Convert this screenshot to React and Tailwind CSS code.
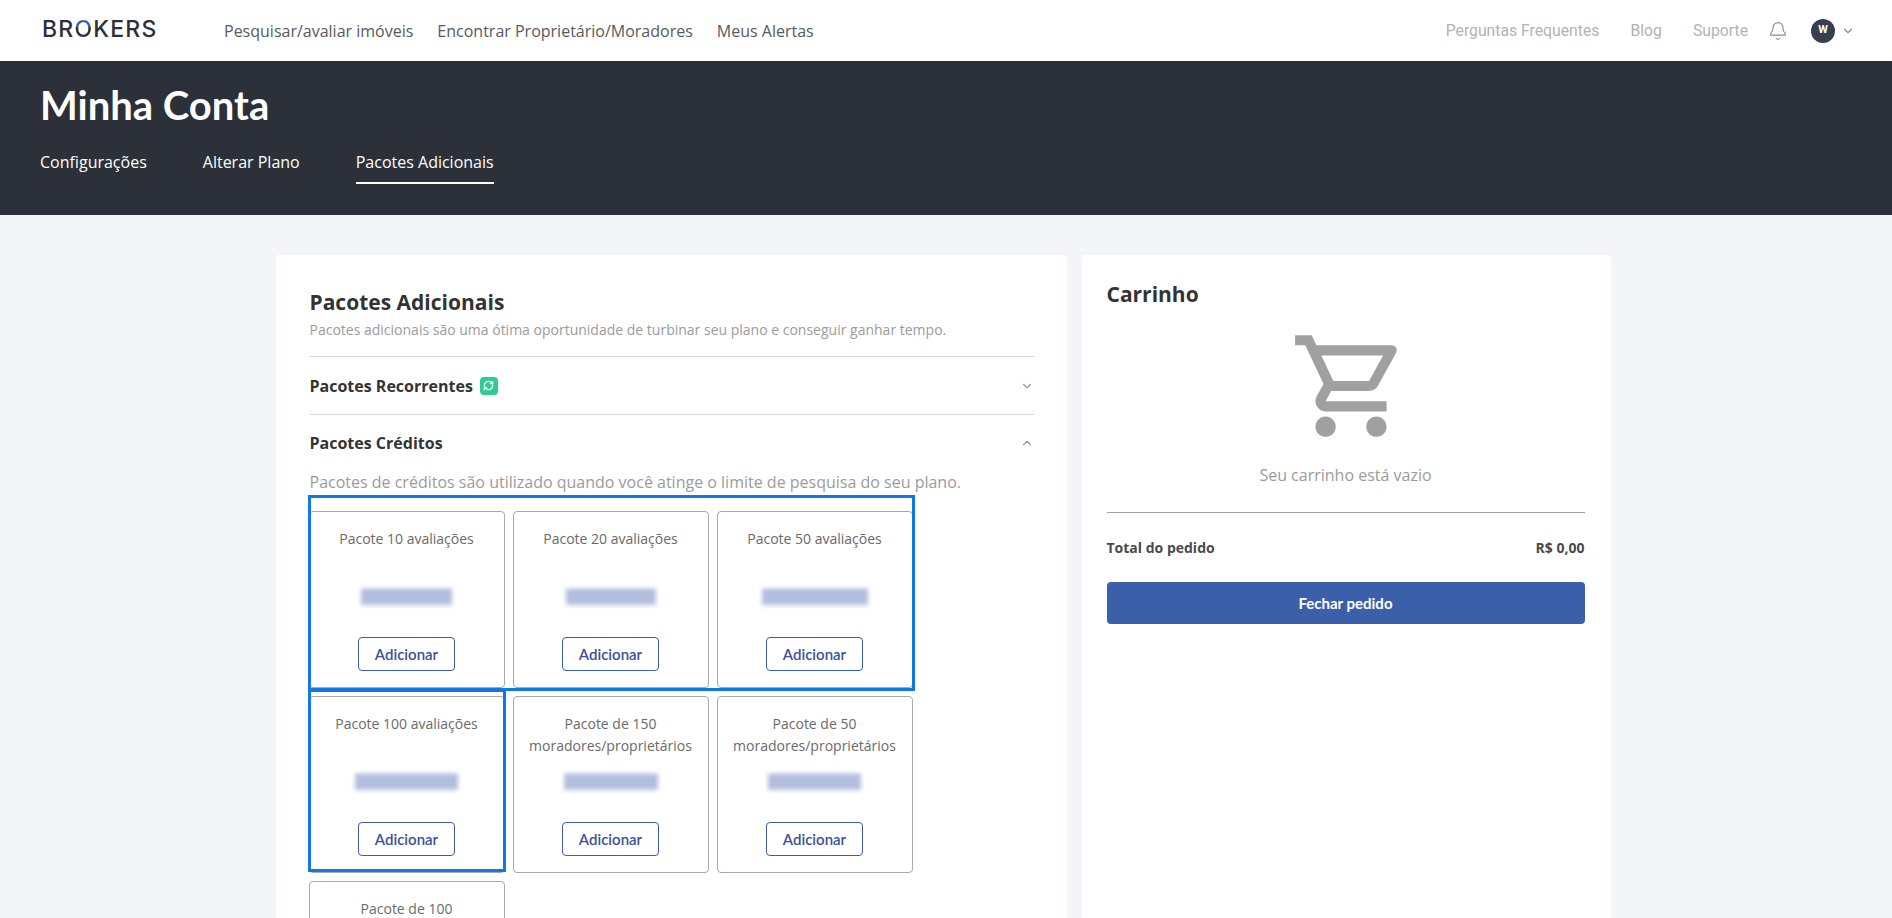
import React from "react";
import { Bell, ChevronDown, ChevronUp, RefreshCw } from "lucide-react";

const openSans = "font-['Open_Sans',sans-serif]";
const quick = "font-['Lato',sans-serif]";

const packages = [
  { id: 1, title: ["Pacote 10 avaliações"], blur: "w-[91px]" },
  { id: 2, title: ["Pacote 20 avaliações"], blur: "w-[90px]" },
  { id: 3, title: ["Pacote 50 avaliações"], blur: "w-[106px]" },
  { id: 4, title: ["Pacote 100 avaliações"], blur: "w-[103px]" },
  { id: 5, title: ["Pacote de 150", "moradores/proprietários"], blur: "w-[94px]" },
  { id: 6, title: ["Pacote de 50", "moradores/proprietários"], blur: "w-[93px]" },
  { id: 7, title: ["Pacote de 100", "moradores/proprietários"], blur: "w-[92px]" },
];

const PackageCard = ({ item }) => (
  <div className="h-[177px] rounded border border-[#a9a9a9] bg-white flex flex-col items-center pt-[16px]">
    <div className={`${openSans} h-[44px] text-center text-[14px] leading-[22px] text-[#6a6a6a]`}>
      {item.title.map((line) => (
        <div key={line}>{line}</div>
      ))}
    </div>
    <div className="flex flex-1 items-center">
      {/* price is blurred out in the picture */}
      <div
        className={`${item.blur} h-[16px] mb-[16px] blur-[2px] bg-[repeating-linear-gradient(180deg,#8a9dcb_0px,#8a9dcb_2px,#ccd4e9_2px,#ccd4e9_5px)]`}
      />
    </div>
    <button
      className={`${quick} mb-[16px] h-[34px] w-[97px] rounded border border-[#3b5ea9] bg-white text-[15px] font-semibold text-[#3b5199]`}
    >
      Adicionar
    </button>
  </div>
);

export default function App() {
  return (
    <div className={`${openSans} h-screen overflow-hidden bg-[#f3f5f9]`}>
      {/* top nav */}
      <header className="flex h-[61px] items-center bg-white pl-[42px] pr-[37px]">
        <div className="mb-[3px] w-[182px] font-['Inter',sans-serif] text-[23px] font-medium leading-none tracking-[1.2px] text-[#2c3038]">
          BR
          <span className="bg-[linear-gradient(180deg,#3b5ea9_0%,#3b5ea9_42%,#2c3038_42%,#2c3038_100%)] bg-clip-text text-transparent">O</span>
          KERS
        </div>
        <nav className="flex gap-[24px] text-[16px] text-[#555a60]">
          <span>Pesquisar/avaliar imóveis</span>
          <span>Encontrar Proprietário/Moradores</span>
          <span>Meus Alertas</span>
        </nav>
        <div className="ml-auto flex items-center font-['Roboto',sans-serif] text-[15.75px] text-[#b1b3b8]">
          <span>Perguntas Frequentes</span>
          <span className="ml-[31px]">Blog</span>
          <span className="ml-[31px]">Suporte</span>
          <Bell className="ml-[20px] h-[20px] w-[20px] text-[#8b8d92]" strokeWidth={1.4} />
          <div className="ml-[23px] flex h-[24px] w-[24px] items-center justify-center rounded-full bg-[#373f4e] text-[11px] font-bold text-white">
            W
          </div>
          <ChevronDown className="ml-[6px] h-[14px] w-[14px] text-[#8b8d92]" />
        </div>
      </header>

      {/* account band */}
      <section className="h-[154px] bg-[#2c3139] pl-[40px] text-white">
        <h1 className={`${quick} pt-[20px] text-[40px] font-bold leading-[48px]`}>Minha Conta</h1>
        <div className="mt-[21px] flex gap-[56px] text-[16px]">
          <span className="pb-[8px]">Configurações</span>
          <span className="pb-[8px]">Alterar Plano</span>
          <span className="border-b-2 border-white pb-[8px]">Pacotes Adicionais</span>
        </div>
      </section>

      <main className="flex justify-center gap-[15px] pt-[40px] pr-[6px]">
        {/* packages */}
        <div className="w-[791px] rounded-t bg-white pl-[34px] pr-[33px] pt-[34px]">
          <h2 className="text-[21px] font-bold leading-[27px] text-[#333333]">Pacotes Adicionais</h2>
          <p className="mt-[4px] text-[14px] leading-[20px] text-[#9b9b9b]">
            Pacotes adicionais são uma ótima oportunidade de turbinar seu plano e conseguir ganhar tempo.
          </p>
          <div className="mt-[16px] flex h-[58px] items-center justify-between border-t border-[#d5d5d5]">
            <div className="flex items-center gap-[7px]">
              <span className="text-[16px] font-bold text-[#333333]">Pacotes Recorrentes</span>
              <span className="flex h-[18px] w-[18px] items-center justify-center rounded-[4px] bg-[#2fcb95]">
                <RefreshCw className="h-[11px] w-[11px] text-white" strokeWidth={3} />
              </span>
            </div>
            <ChevronDown className="h-[14px] w-[14px] text-[#9b9b9b]" />
          </div>
          <div className="flex h-[56px] items-center justify-between border-t border-[#d5d5d5]">
            <span className="text-[16px] font-bold text-[#333333]">Pacotes Créditos</span>
            <ChevronUp className="h-[14px] w-[14px] text-[#9b9b9b]" />
          </div>
          <p className="-mt-[1px] text-[16px] leading-[26px] text-[#9b9b9b]">
            Pacotes de créditos são utilizado quando você atinge o limite de pesquisa do seu plano.
          </p>
          <div className="relative -ml-[1px] mt-[16px] grid w-[604px] grid-cols-3 gap-[8px]">
            {packages.map((item) => (
              <PackageCard key={item.id} item={item} />
            ))}
            {/* blue highlight boxes over the cards */}
            <div className="absolute left-[-1px] top-[-16px] h-[196px] w-[607px] border-[3px] border-[#0f7ae5]" />
            <div className="absolute left-[-1px] top-[178px] h-[183px] w-[198px] border-[3px] border-[#0f7ae5]" />
          </div>
        </div>

        {/* cart */}
        <aside className="w-[529px] rounded-t bg-white pl-[25px] pr-[26px] pt-[26px]">
          <h2 className="text-[21px] font-bold leading-[27px] text-[#333333]">Carrinho</h2>
          <div className="flex justify-center">
            <svg viewBox="0 0 24 24" className="ml-[10px] mt-[17px] h-[122px] w-[122px] fill-[#a0a0a0]">
              <path d="M15.55 13c.75 0 1.41-.41 1.75-1.03l3.58-6.49A.996.996 0 0 0 20.01 4H5.21l-.94-2H1v2h2l3.6 7.59-1.35 2.44C4.52 15.37 5.48 17 7 17h12v-2H7l1.1-2h7.45zM6.16 6h12.15l-2.76 5H8.53L6.16 6zM7 18c-1.1 0-1.99.9-1.99 2S5.9 22 7 22s2-.9 2-2-.9-2-2-2zm10 0c-1.1 0-1.99.9-1.99 2s.89 2 1.99 2 2-.9 2-2-.9-2-2-2z" />
            </svg>
          </div>
          <p className="mt-[16px] text-center text-[16px] leading-[24px] text-[#9b9b9b]">Seu carrinho está vazio</p>
          <div className="mt-[25px] border-t border-[#a0a0a0]" />
          <div className="mt-[25px] flex items-center justify-between text-[14px] font-bold leading-[20px] text-[#4a4a4a]">
            <span>Total do pedido</span>
            <span>R$ 0,00</span>
          </div>
          <button className={`${quick} mt-[24px] h-[42px] w-full rounded bg-[#3b60a9] text-[15px] font-bold text-white`}>
            Fechar pedido
          </button>
        </aside>
      </main>
    </div>
  );
}
